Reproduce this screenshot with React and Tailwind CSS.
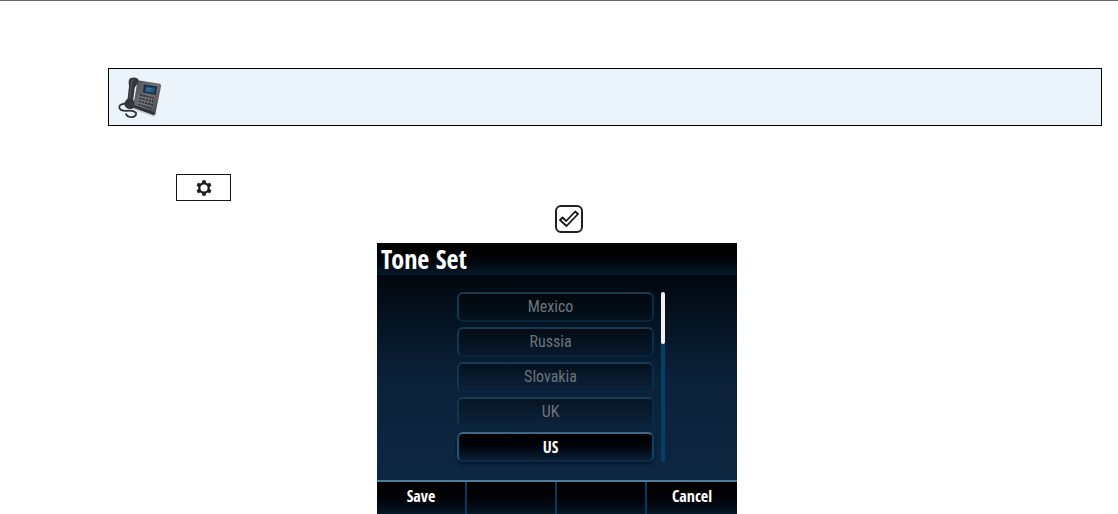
const tones = ["Mexico", "Russia", "Slovakia", "UK", "US"];
const softKeys = ["Save", "", "", "Cancel"];
const toothAngles = [0, 60, 120, 180, 240, 300];

function PhoneIcon() {
  return (
    <svg width="52" height="48" viewBox="35 43 150 138" aria-label="Desk phone" role="img">
      <defs>
        <linearGradient id="phone-body" x1="0" y1="0" x2="1" y2="1">
          <stop offset="0" stopColor="#4b5058" />
          <stop offset="0.5" stopColor="#6f7076" />
          <stop offset="1" stopColor="#3d4046" />
        </linearGradient>
      </defs>
      <path d="M98 148 L160 170 L168 158 L108 134 Z" fill="#c9d0d6" />
      <path d="M112 64 L176 74 Q181 76 179 83 L163 160 Q161 165 155 163 L98 142 Z" fill="url(#phone-body)" />
      <path d="M100 134 L160 155 L159 164 L98 142 Z" fill="#303338" />
      <path d="M130 76 L168 82 L164 106 L127 99 Z" fill="#182d42" />
      <path d="M136 81 L163 85 L160 101 L132 96 Z" fill="#1f5078" />
      <path d="M137 86 L155 90 M135 92 L150 95" stroke="#5b95bb" strokeWidth="2" />
      <circle cx="166" cy="113" r="4" fill="#8b5257" />
      <g stroke="#2c2f34" strokeWidth="5" strokeDasharray="6 3">
        <path d="M119 106 L157 115" />
        <path d="M118 115 L158 125" />
        <path d="M116 124 L156 135" />
        <path d="M114 133 L152 145" />
      </g>
      <path d="M116 111 L154 120 M115 120 L156 130 M113 129 L153 140" stroke="#92969b" strokeWidth="1" />
      <path
        d="M92 57 Q108 53 113 60 Q117 67 110 76 Q102 83 102 98 L99 119 Q105 128 101 142 Q97 150 82 145 Q72 139 74 128 Q77 121 83 116 L87 80 Q83 61 92 57 Z"
        fill="#33363b"
      />
      <path d="M99 61 Q93 66 94 78 L89 116" fill="none" stroke="#575b61" strokeWidth="3" />
      <path
        d="M76 131 Q58 133 59 142 Q60 152 78 152 Q98 149 107 157 Q109 168 96 170 Q80 170 78 159"
        fill="none"
        stroke="#2d3034"
        strokeWidth="5"
      />
    </svg>
  );
}

function GearIcon() {
  return (
    <svg width="16" height="16" viewBox="0 0 16 16" aria-hidden="true">
      {toothAngles.map((angle) => (
        <path key={angle} d="M5.6 4 L6.5 0.3 H9.5 L10.4 4 Z" fill="#1f1c1d" transform={`rotate(${angle} 8 8)`} />
      ))}
      <circle cx="8" cy="8" r="4.7" fill="white" stroke="#1f1c1d" strokeWidth="2.2" />
    </svg>
  );
}

function CheckIcon() {
  return (
    <svg width="20" height="18" viewBox="0 0 20 18" aria-hidden="true">
      <path
        d="M1 10 L3.5 7.5 L7.2 11 L16.2 1.5 L19 4 L7.5 16 Z"
        fill="white"
        stroke="#151515"
        strokeWidth="1.8"
        strokeLinejoin="round"
      />
    </svg>
  );
}

function ToneButton({ name, selected }) {
  return (
    <button
      type="button"
      aria-pressed={selected}
      className={
        selected
          ? "flex h-[30px] items-center justify-center rounded-md border-2 border-t-[#41698a] border-r-[#0b4269] border-b-[#072c4b] border-l-[#1d547d] bg-linear-to-b from-black to-[#0e2136] pr-2.5 text-base font-bold text-white shadow-[0_2px_3px_#051426]"
          : "flex h-[30px] items-center justify-center rounded-md border-2 border-t-[#1a3a54] border-r-[#082c4b] border-b-[#06263f] border-l-[#123754] bg-linear-to-b from-black/40 to-black/5 pr-2.5 font-['Roboto_Condensed','Open_Sans_Condensed','Noto_Sans',sans-serif] text-base font-normal text-[#6c737b]"
      }
    >
      {name}
    </button>
  );
}

function PhoneScreen() {
  return (
    <section className="w-[360px] bg-[#0e2740] font-['Open_Sans_Condensed','Roboto_Condensed','Noto_Sans',sans-serif]">
      <h1 className="h-8 bg-linear-to-b from-black to-[#071a2b] pl-1 text-[26px] leading-8 font-bold text-white">
        Tone Set
      </h1>
      <div className="flex gap-[7px] bg-linear-to-b from-[#02080f] via-[#0b213a] via-50% to-[#0e2740] pt-[17px] pr-[72px] pb-[18px] pl-20">
        <div className="flex flex-1 flex-col gap-[5px]">
          {tones.map((tone) => (
            <ToneButton key={tone} name={tone} selected={tone === "US"} />
          ))}
        </div>
        <div className="w-1 rounded-full bg-[#034069]">
          <div className="h-[52px] rounded-full bg-[#f1f1f1]" />
        </div>
      </div>
      <div className="grid grid-cols-4 divide-x-2 divide-[#06395f] border-t-2 border-[#4d7d9d] bg-linear-to-b from-black to-[#071726]">
        {softKeys.map((label, i) => (
          <button key={i} type="button" aria-label={label || "Unused key"} className="h-8 pb-1 text-base font-bold text-white">
            {label}
          </button>
        ))}
      </div>
    </section>
  );
}

export default function App() {
  return (
    <main className="bg-white">
      <hr className="border-t border-[#666666]" />
      <div className="mt-[67px] mr-4 ml-[108px] border border-black bg-[#ebf3fb] py-1 pl-0.5">
        <PhoneIcon />
      </div>
      <div className="mt-12 flex pl-44">
        <button
          type="button"
          aria-label="Settings"
          className="flex h-[27px] w-[55px] items-center justify-center border border-[#151515] bg-white"
        >
          <GearIcon />
        </button>
      </div>
      <div className="mt-1 flex justify-center pl-5">
        <button
          type="button"
          aria-label="Select"
          className="flex size-7 items-center justify-center rounded-md border-2 border-[#202020] bg-white"
        >
          <CheckIcon />
        </button>
      </div>
      <div className="mt-2.5 flex justify-center pr-1">
        <PhoneScreen />
      </div>
    </main>
  );
}
